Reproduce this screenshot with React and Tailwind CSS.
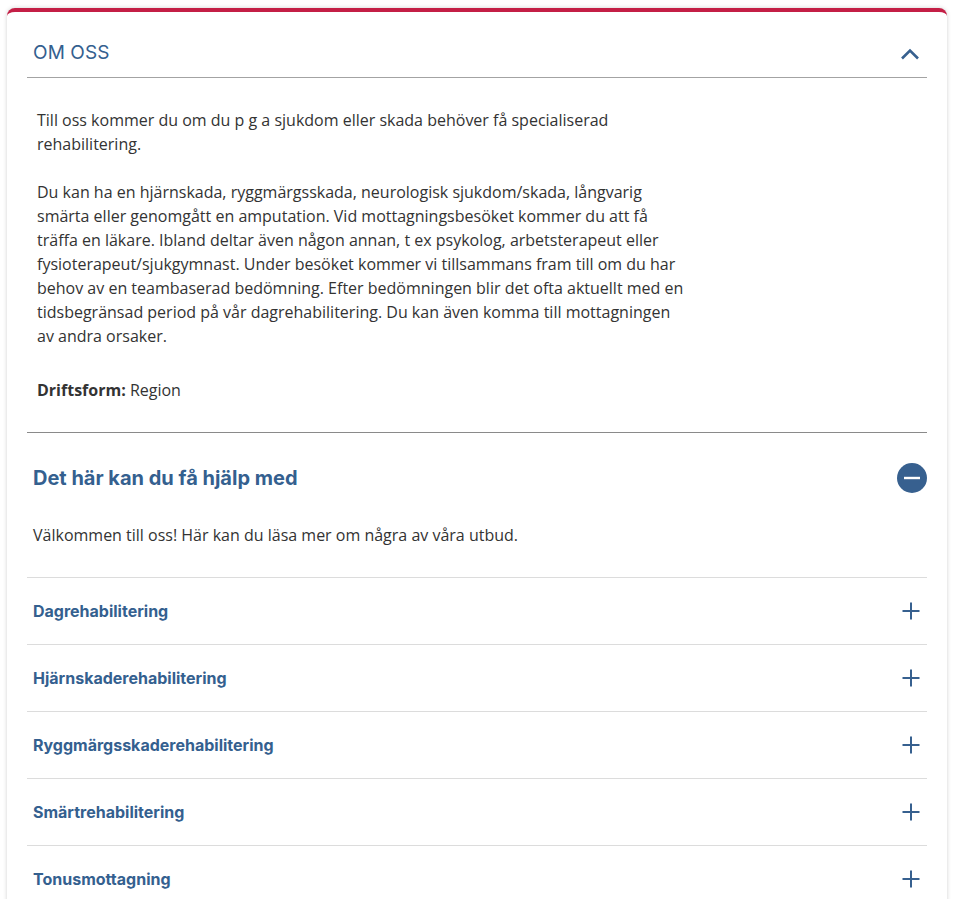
import { useState } from 'react';

const services = [
  'Dagrehabilitering',
  'Hjärnskaderehabilitering',
  'Ryggmärgsskaderehabilitering',
  'Smärtrehabilitering',
  'Tonusmottagning',
];

const ChevronUp = () => (
  <svg width="20" height="12" viewBox="0 0 20 12" fill="none">
    <path d="M2 10.5 L10 2.5 L18 10.5" stroke="#37608f" strokeWidth="2.6" strokeLinecap="butt" />
  </svg>
);

const MinusCircle = () => (
  <svg width="30" height="30" viewBox="0 0 30 30">
    <circle cx="15" cy="15" r="15" fill="#37608f" />
    <rect x="7" y="13.8" width="16" height="2.4" fill="#fff" />
  </svg>
);

const Plus = () => (
  <svg width="18" height="18" viewBox="0 0 18 18">
    <rect x="0.5" y="8" width="17" height="2" fill="#37608f" />
    <rect x="8" y="0.5" width="2" height="17" fill="#37608f" />
  </svg>
);

export default function App() {
  const [open, setOpen] = useState(null);

  return (
    <div className="min-h-screen bg-white overflow-hidden">
      <div className="ml-[7px] mt-[8px] w-[940px] rounded-t-[8px] border-t-4 border-[#c41f46] bg-white shadow-[0_0_4px_rgba(0,0,0,0.18)] px-5 pb-6">
        {/* Om oss */}
        <div className="flex h-[66px] items-center justify-between border-b border-[#a3a3a3] pt-[18px] pl-[6px] pr-[7px]">
          <h2 className="text-[19px] text-[#34608f] font-['Inter',sans-serif] tracking-[0.1px]">OM OSS</h2>
          <ChevronUp />
        </div>

        <div className="pl-[10px] pt-[30px] pb-[30px] text-[16px] leading-[24px] text-[#333] font-['Open_Sans',sans-serif] border-b border-[#8a8a8a]">
          <p className="max-w-[650px]">
            Till oss kommer du om du p g a sjukdom eller skada behöver få specialiserad rehabilitering.
          </p>
          <p className="mt-6 max-w-[650px]">
            Du kan ha en hjärnskada, ryggmärgsskada, neurologisk sjukdom/skada, långvarig smärta eller genomgått en
            amputation. Vid mottagningsbesöket kommer du att få träffa en läkare. Ibland deltar även någon annan, t ex
            psykolog, arbetsterapeut eller fysioterapeut/sjukgymnast. Under besöket kommer vi tillsammans fram till om du
            har behov av en teambaserad bedömning. Efter bedömningen blir det ofta aktuellt med en tidsbegränsad period på
            vår dagrehabilitering. Du kan även komma till mottagningen av andra orsaker.
          </p>
          <p className="mt-[30px]">
            <span className="font-bold">Driftsform:</span> Region
          </p>
        </div>

        {/* Det här kan du få hjälp med */}
        <div className="flex items-center justify-between pl-[6px] pt-[30px]">
          <h3 className="text-[20px] leading-[30px] font-bold text-[#34608f] font-['Inter',sans-serif]">
            Det här kan du få hjälp med
          </h3>
          <MinusCircle />
        </div>
        <p className="pl-[6px] pt-[30px] pb-[30px] text-[16px] leading-[24px] text-[#333] font-['Open_Sans',sans-serif] border-b border-[#dcdcdc]">
          Välkommen till oss! Här kan du läsa mer om några av våra utbud.
        </p>

        {services.map((name, i) => (
          <button
            key={name}
            onClick={() => setOpen(open === i ? null : i)}
            className="flex h-[67px] w-full items-center justify-between border-b border-[#dcdcdc] pl-[6px] pr-[7px] text-left"
          >
            <span className="text-[16px] font-bold text-[#34608f] font-['Inter',sans-serif]">{name}</span>
            <Plus />
          </button>
        ))}
      </div>
    </div>
  );
}
